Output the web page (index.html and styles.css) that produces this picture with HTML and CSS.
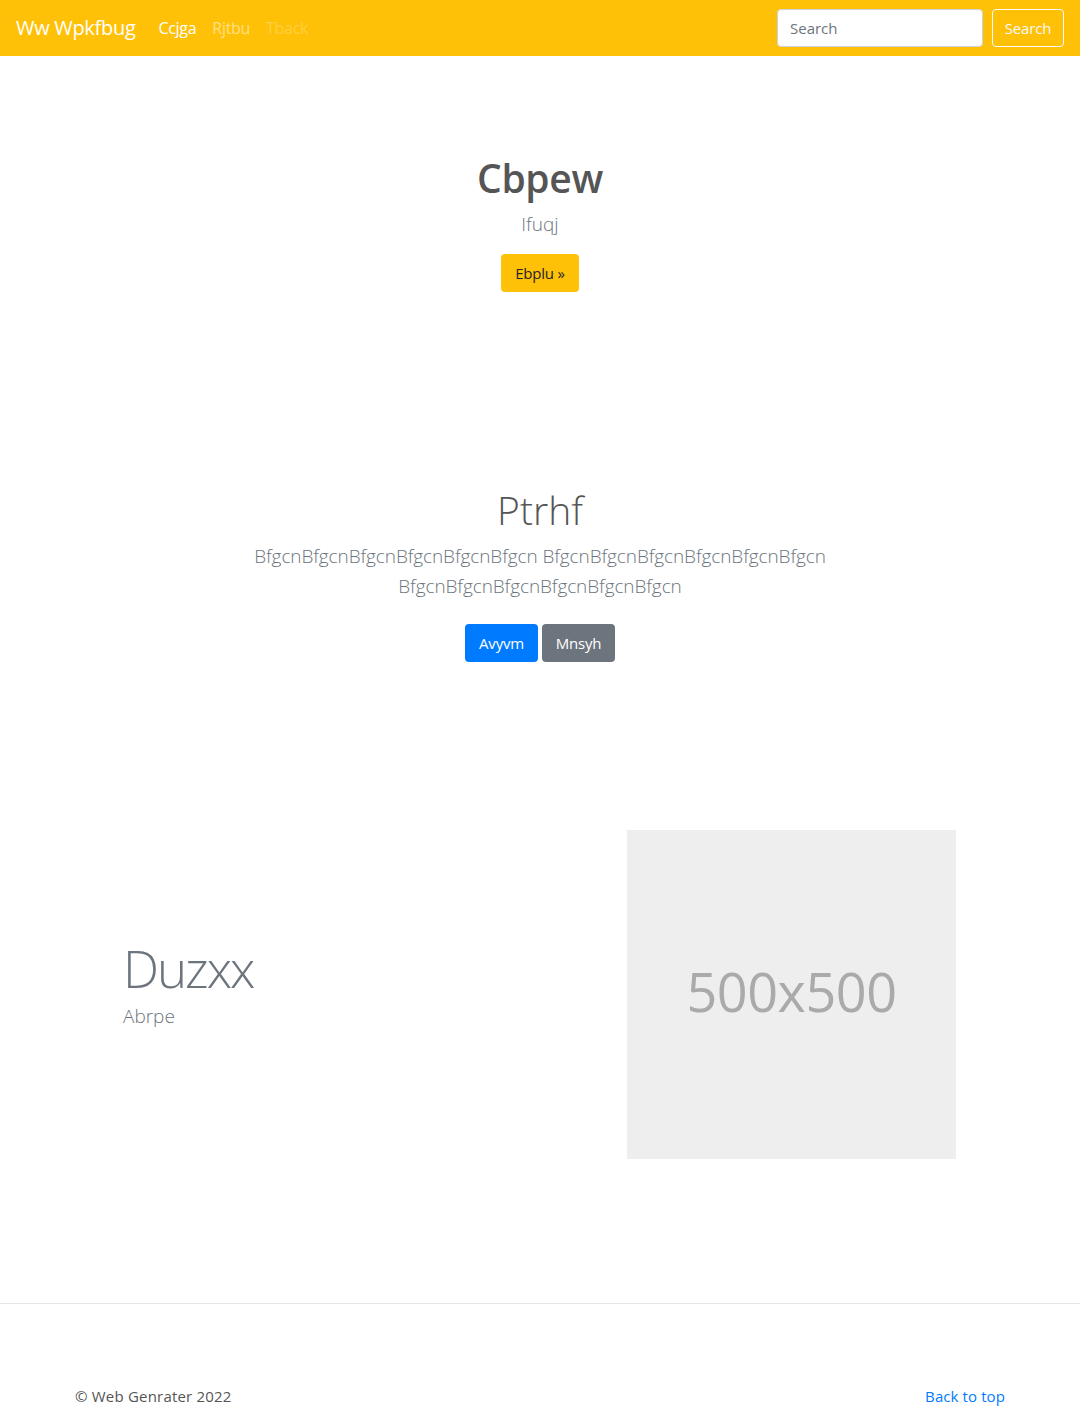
FILE: index.html
```html
<!DOCTYPE html>
<html lang="en">
<head>
<meta charset="utf-8">
<title>Ww Wpkfbug</title>
<link rel="stylesheet" href="styles.css">
</head>
<body>
<header class="navbar">
  <div class="nav-left">
    <a class="brand" href="#">Ww Wpkfbug</a>
    <nav class="nav-links">
      <a class="nav-link active" href="#">Ccjga</a>
      <a class="nav-link" href="#">Rjtbu</a>
      <a class="nav-link disabled" href="#">Tback</a>
    </nav>
  </div>
  <form class="search-form">
    <input class="search-input" type="text" placeholder="Search">
    <button class="btn btn-outline-light" type="button">Search</button>
  </form>
</header>

<main>
  <section class="hero">
    <h1 class="hero-title">Cbpew</h1>
    <p class="hero-lead">Ifuqj</p>
    <a class="btn btn-warning" href="#">Ebplu »</a>
  </section>

  <section class="intro">
    <h2 class="intro-title">Ptrhf</h2>
    <p class="intro-lead">BfgcnBfgcnBfgcnBfgcnBfgcnBfgcn BfgcnBfgcnBfgcnBfgcnBfgcnBfgcn BfgcnBfgcnBfgcnBfgcnBfgcnBfgcn</p>
    <div class="intro-actions">
      <a class="btn btn-primary" href="#">Avyvm</a>
      <a class="btn btn-secondary" href="#">Mnsyh</a>
    </div>
  </section>

  <section class="feature">
    <div class="feature-text">
      <h2 class="feature-title">Duzxx</h2>
      <p class="feature-lead">Abrpe</p>
    </div>
    <div class="feature-media">
      <div class="placeholder">500x500</div>
    </div>
  </section>
</main>

<footer class="footer">
  <p class="copy">© Web Genrater 2022</p>
  <a class="back-top" href="#">Back to top</a>
</footer>
</body>
</html>
```

FILE: styles.css
```css
* { box-sizing: border-box; }

html, body {
  margin: 0;
  padding: 0;
}

body {
  font-family: "Open Sans", "Noto Sans", "Liberation Sans", sans-serif;
  font-size: 16px;
  line-height: 1.5;
  color: #212529;
  background: #fff;
}

a { text-decoration: none; }

.navbar {
  height: 56px;
  background: #ffc107;
  display: flex;
  align-items: center;
  justify-content: space-between;
  padding: 0 16px;
}

.nav-left {
  display: flex;
  align-items: center;
}

.brand {
  color: #fff;
  font-size: 20px;
  margin-right: 15px;
  line-height: 30px;
  letter-spacing: -0.3px;
}

.nav-links {
  display: flex;
}

.nav-link {
  padding: 8px 8px;
  font-size: 16px;
  color: rgba(255, 255, 255, 0.5);
  letter-spacing: -0.3px;
}

.nav-link.active { color: #fff; }
.nav-link.disabled { color: rgba(255, 255, 255, 0.25); }

.search-form {
  display: flex;
  align-items: center;
  gap: 9px;
}

.search-input {
  width: 206px;
  height: 38px;
  border: 1px solid #ced4da;
  border-radius: 4px;
  padding: 6px 12px;
  font-family: inherit;
  font-size: 15px;
  color: #495057;
  background: #fff;
}

.search-input::placeholder { color: #6c757d; }

.btn {
  display: inline-flex;
  align-items: center;
  justify-content: center;
  height: 38px;
  padding: 0 12px;
  border-radius: 4px;
  font-family: inherit;
  font-size: 15px;
  border: 1px solid transparent;
  letter-spacing: -0.2px;
}

.btn-outline-light {
  background: transparent;
  border-color: #f8f9fa;
  color: #f8f9fa;
  width: 72px;
}

.btn-warning {
  background: #ffc107;
  color: #212529;
}

.btn-primary {
  background: #007bff;
  color: #fff;
}

.btn-secondary {
  background: #6c757d;
  color: #fff;
}

.hero {
  text-align: center;
  padding-top: 98px;
}

.hero-title {
  margin: 0 0 7px;
  font-size: 39px;
  line-height: 48px;
  font-weight: 600;
  color: #555;
  letter-spacing: -0.3px;
}

.hero-lead {
  margin: 0 0 15px;
  font-size: 19px;
  line-height: 30px;
  font-weight: 300;
  color: #6c757d;
}

.hero .btn { width: 78px; }

.intro {
  text-align: center;
  padding-top: 194px;
}

.intro-title {
  margin: 0 0 7px;
  font-size: 39px;
  line-height: 48px;
  font-weight: 300;
  color: #555;
}

.intro-lead {
  width: 620px;
  margin: 0 auto 23px;
  font-size: 19px;
  line-height: 30px;
  font-weight: 300;
  color: #6c757d;
  letter-spacing: -0.1px;
}

.intro-actions {
  display: flex;
  justify-content: center;
  gap: 4px;
}

.intro-actions .btn-primary { width: 73px; }
.intro-actions .btn-secondary { width: 73px; }

.feature {
  width: 930px;
  margin: 168px auto 0;
  display: grid;
  grid-template-columns: 1fr 1fr;
  align-items: center;
}

.feature-text {
  padding: 0 48px 21px;
}

.feature-title {
  margin: 0;
  font-size: 51px;
  line-height: 60px;
  font-weight: 300;
  color: #6c757d;
  letter-spacing: -2px;
}

.feature-lead {
  margin: 3px 0 0;
  font-size: 19px;
  line-height: 30px;
  font-weight: 300;
  color: #6c757d;
}

.feature-media {
  display: flex;
  justify-content: flex-end;
  padding-right: 49px;
}

.placeholder {
  width: 329px;
  height: 329px;
  background: #eee;
  color: #aaa;
  font-size: 54px;
  display: flex;
  align-items: center;
  justify-content: center;
  letter-spacing: -0.5px;
  padding-bottom: 6px;
}

.footer {
  margin-top: 144px;
  border-top: 1px solid #e5e5e5;
  padding: 80px 75px 0;
  display: flex;
  justify-content: space-between;
  align-items: flex-start;
}

.copy {
  margin: 0;
  font-size: 15px;
  line-height: 24px;
  color: #555;
  letter-spacing: 0.2px;
}

.back-top {
  font-size: 15px;
  line-height: 24px;
  color: #007bff;
  letter-spacing: 0.1px;
}
```
